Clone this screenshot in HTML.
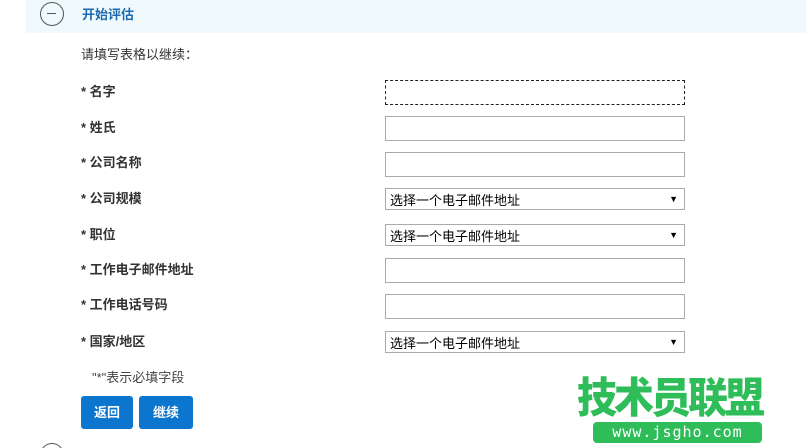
<!DOCTYPE html>
<html><head><meta charset="utf-8"><style>
*{margin:0;padding:0;box-sizing:border-box}
html,body{width:806px;height:448px;overflow:hidden}
body{background:#fff;font-family:"Liberation Sans","Noto Sans CJK SC",sans-serif;position:relative;color:#333}
.abs{position:absolute}
.hdr{left:26px;top:0;width:780px;height:33px;background:#f0f9fc}
.circ{width:24px;height:24px;border:1.5px solid #555;border-radius:50%}
.circ:after{content:"";position:absolute;left:6px;top:10px;width:9px;height:1px;background:#555}
.lbl{left:81px;font-size:13px;font-weight:bold;color:#333}
.in{left:385px;width:300px;height:25px;border:1px solid #aaa;background:#fff}
.sel{left:385px;width:300px;height:22px;border:1px solid #aaa;background:#fff;font-size:13px;padding-left:4px;line-height:24px;color:#000}
.sel:after{content:"▼";position:absolute;right:6px;top:-2px;font-size:9px}
.btn{top:396px;height:33px;background:#0c76cf;color:#fff;font-size:13px;font-weight:bold;text-align:center;line-height:33px;border-radius:3px}
</style></head><body>
<div class="abs hdr"></div>
<div class="abs circ" style="left:40px;top:2px"></div>
<div class="abs" style="left:82px;top:4px;font-size:13px;font-weight:bold;color:#1d6bb0">开始评估</div>
<div class="abs" style="left:81px;top:44px;font-size:13px;color:#333">请填写表格以继续：</div>
<div class="abs lbl" style="top:81px">* 名字</div>
<div class="abs lbl" style="top:117px">* 姓氏</div>
<div class="abs lbl" style="top:152px">* 公司名称</div>
<div class="abs lbl" style="top:188px">* 公司规模</div>
<div class="abs lbl" style="top:224px">* 职位</div>
<div class="abs lbl" style="top:259px">* 工作电子邮件地址</div>
<div class="abs lbl" style="top:294px">* 工作电话号码</div>
<div class="abs lbl" style="top:331px">* 国家/地区</div>
<div class="abs in" style="top:80px;border:1px dashed #222"></div>
<div class="abs in" style="top:116px"></div>
<div class="abs in" style="top:152px"></div>
<div class="abs sel" style="top:188px">选择一个电子邮件地址</div>
<div class="abs sel" style="top:224px">选择一个电子邮件地址</div>
<div class="abs in" style="top:258px"></div>
<div class="abs in" style="top:294px"></div>
<div class="abs sel" style="top:331px">选择一个电子邮件地址</div>
<div class="abs" style="left:92px;top:367px;font-size:13px;color:#444">"*"表示必填字段</div>
<div class="abs btn" style="left:81px;width:52px">返回</div>
<div class="abs btn" style="left:139px;width:54px">继续</div>
<div class="abs circ" style="left:40px;top:443px"></div>
<div class="abs" style="left:577px;top:376px;font-size:40px;font-weight:900;color:#2ebd59;letter-spacing:-3px;line-height:46px;transform:scaleY(1.05)">技术员联盟</div>
<div class="abs" style="left:593px;top:422px;width:169px;height:21px;background:#2ebd59;border-radius:4px;color:#fff;font-family:'DejaVu Sans Mono',monospace;font-size:15px;letter-spacing:1px;text-align:center;line-height:21px">www.jsgho.com</div>
</body></html>
